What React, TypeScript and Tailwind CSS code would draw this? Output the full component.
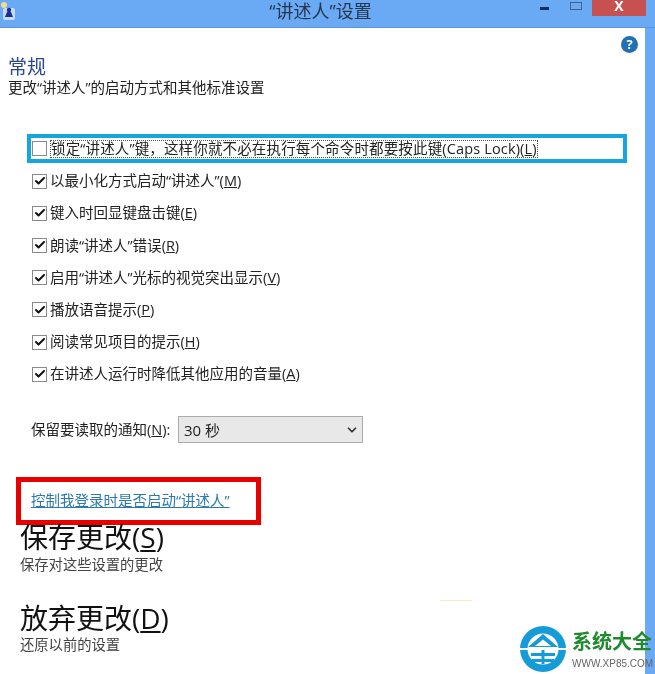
import { Check, ChevronDown } from 'lucide-react'

const options = [
  { label: '以最小化方式启动“讲述人”', key: 'M' },
  { label: '键入时回显键盘击键', key: 'E' },
  { label: '朗读“讲述人”错误', key: 'R' },
  { label: '启用“讲述人”光标的视觉突出显示', key: 'V' },
  { label: '播放语音提示', key: 'P' },
  { label: '阅读常见项目的提示', key: 'H' },
  { label: '在讲述人运行时降低其他应用的音量', key: 'A' },
]

function NarratorIcon() {
  return (
    <svg width="16" height="20" viewBox="0 0 16 20" className="ml-px mt-0.5">
      <circle cx="3" cy="3" r="3" fill="#f4dc8a" />
      <rect x="2" y="6" width="12" height="12" rx="2" fill="#c9d9f2" />
      <circle cx="8" cy="8" r="2.2" fill="#1b2f8c" />
      <path d="M4 15 L6 10 H10 L12 15 Z" fill="#1b2f8c" />
    </svg>
  )
}

function Logo() {
  return (
    <svg width="46" height="46" viewBox="0 0 46 46">
      <circle cx="23" cy="23" r="23" fill="#169bd9" />
      <circle cx="23" cy="23" r="15.5" fill="#fff" />
      <path d="M23 8 L38 21 H8 Z" fill="#169bd9" />
      <path d="M23 13.5 L31 20 H15 Z" fill="#fff" />
      <rect x="0" y="22" width="46" height="2" fill="#fff" />
      <rect x="11" y="27" width="24" height="3" fill="#169bd9" />
      <rect x="12" y="33" width="22" height="3" fill="#169bd9" />
      <rect x="21.5" y="24" width="3" height="14" fill="#169bd9" />
    </svg>
  )
}

export default function App() {
  return (
    <div className="relative flex h-[674px] w-[655px] flex-col overflow-hidden bg-[#6aa9f4] font-['Open_Sans','Noto_Sans_CJK_SC',sans-serif] text-[14.5px] text-[#222] blur-[0.4px]">
      {/* Title bar */}
      <div className="relative flex h-[28px] flex-shrink-0 items-start border-b border-[#5b94d8]">
        <NarratorIcon />
        <span className="flex-1 pl-[84px] text-center text-[18px] leading-[22px] text-[#26364f]">“讲述人”设置</span>
        <div className="mr-[9px] flex items-start">
          <span className="mr-[21px] mt-[7px] h-[2.5px] w-[9px] bg-[#10305f]" />
          <span className="mr-[10px] mt-0.5 h-[8px] w-[12px] border border-[#44658f]" />
          <span className="flex h-[16px] w-[54px] items-start justify-center bg-[#c75050] text-[14px] leading-[11px] font-bold text-white">X</span>
        </div>
      </div>

      <div className="relative mr-[10px] flex flex-1 flex-col bg-white">
        {/* Help */}
        <span className="absolute right-[7px] top-[8px] flex h-[17px] w-[17px] items-center justify-center rounded-full bg-[#2170b5] text-[13px] font-bold text-white">?</span>

        <div className="ml-2 pt-[28px]">
          <h1 className="text-[19px] leading-[22px] text-[#2a4a8f]">常规</h1>
          <p className="leading-[20px]">更改“讲述人”的启动方式和其他标准设置</p>
        </div>

        {/* Caps Lock row, highlighted */}
        <div className="ml-[27px] mt-[36px] flex h-[29px] w-[600px] items-center border-[4px] border-[#16a5de] pl-[1px]">
          <span className="h-[15px] w-[15px] flex-shrink-0 border border-[#8a8a8a] bg-white" />
          <span className="ml-[3px] border border-dotted border-[#555] leading-[16px] tracking-[0.15px] whitespace-nowrap">
            锁定“讲述人”键，这样你就不必在执行每个命令时都要按此键(Caps Lock)(<u>L</u>)
          </span>
        </div>

        <div className="ml-[32px] mt-[2px] flex flex-col">
          {options.map(o => (
            <div key={o.key} className="flex h-[32.2px] items-center">
              <span className="flex h-[15px] w-[15px] flex-shrink-0 items-center justify-center border border-[#8a8a8a] bg-white">
                <Check size={12} strokeWidth={4} className="text-[#111]" />
              </span>
              <span className="ml-[3px] whitespace-nowrap">
                {o.label}(<u>{o.key}</u>)
              </span>
            </div>
          ))}
        </div>

        <div className="ml-[31px] mt-[26px] flex h-[27px] items-center">
          <span className="w-[147px] whitespace-nowrap">保留要读取的通知(<u>N</u>):</span>
          <div className="flex h-full w-[185px] items-center justify-between border border-[#acacac] bg-[#e8e8e8] pl-[5px] pr-[3px] text-[15px]">
            <span>30 秒</span>
            <ChevronDown size={14} strokeWidth={3} className="text-[#333]" />
          </div>
        </div>

        {/* Link, highlighted */}
        <div className="ml-[16px] mt-[34px] flex h-[48px] w-[245px] items-center border-[5px] border-[#e60000] pl-[10px]">
          <a className="whitespace-nowrap text-[#2a7ab0] underline">控制我登录时是否启动“讲述人”</a>
        </div>

        <div className="ml-[20px] -mt-[5px]">
          <div className="text-[28px] leading-[34px] text-[#111]">保存更改(<u>S</u>)</div>
          <div className="mt-px text-[14.3px] leading-[20px] text-[#444]">保存对这些设置的更改</div>
          <div className="mt-[26px] text-[28px] leading-[34px] text-[#111]">放弃更改(<u>D</u>)</div>
          <div className="text-[14.3px] leading-[20px] text-[#444]">还原以前的设置</div>
        </div>
      </div>

      {/* Watermark */}
      <div className="absolute left-[440px] top-[600px] h-px w-[32px] bg-[#fde9c8]" />
      <div className="absolute left-[520px] top-[626px] flex items-start">
        <Logo />
        <div className="ml-[6px] flex flex-col font-['Liberation_Sans','Noto_Sans_CJK_SC',sans-serif]">
          <span className="mt-[4px] whitespace-nowrap text-[20px] leading-[24px] font-bold text-[#1f8a2e]">系统大全</span>
          <span className="mt-[4px] whitespace-nowrap text-[10px] leading-[12px] text-[#666]">WWW.XP85.COM</span>
        </div>
      </div>
    </div>
  )
}
